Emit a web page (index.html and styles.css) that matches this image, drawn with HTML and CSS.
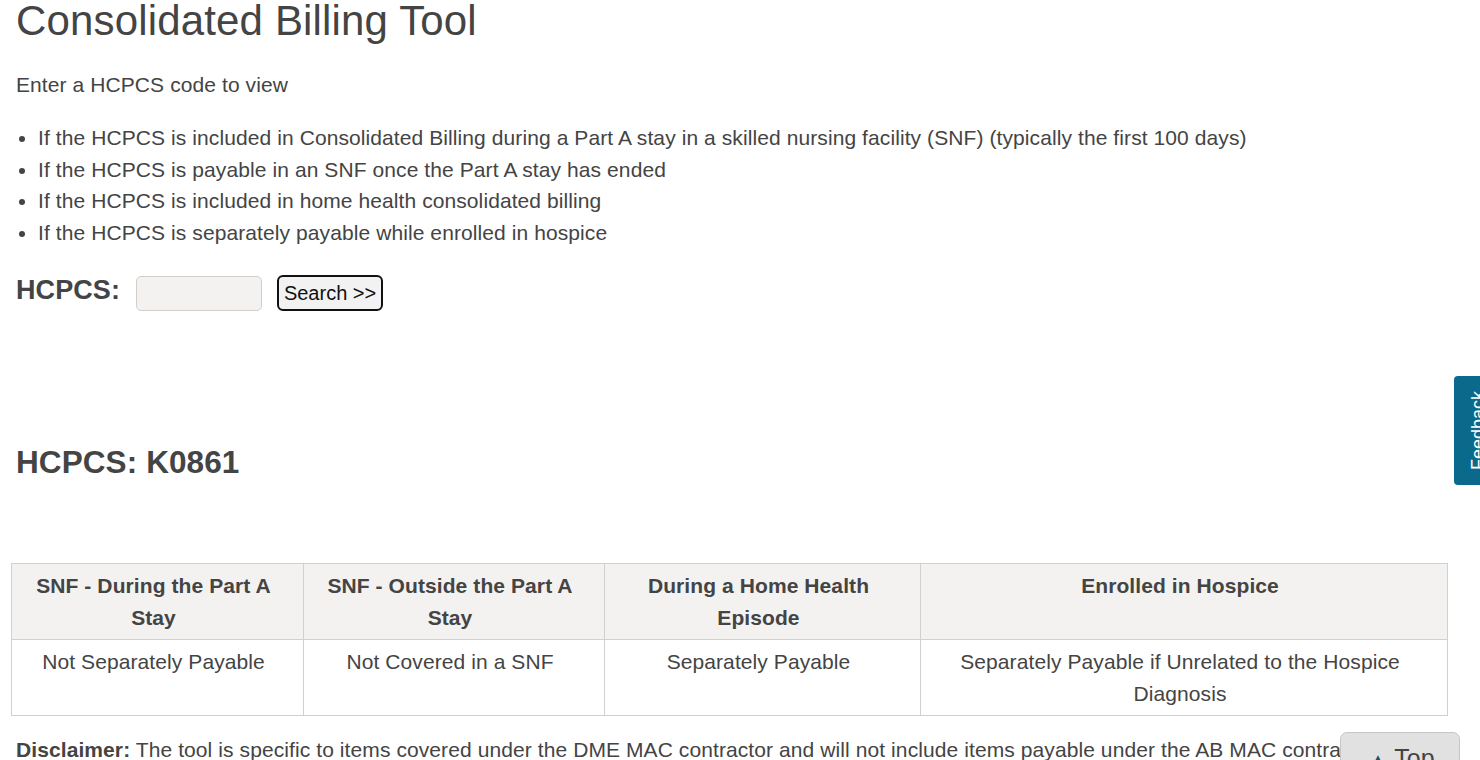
FILE: index.html
```html
<!DOCTYPE html>
<html lang="en">
<head>
<meta charset="utf-8">
<title>Consolidated Billing Tool</title>
<link rel="stylesheet" href="styles.css">
</head>
<body>
<main class="page">
  <h1 class="title">Consolidated Billing Tool</h1>
  <p class="intro">Enter a HCPCS code to view</p>
  <ul class="list">
    <li>If the HCPCS is included in Consolidated Billing during a Part A stay in a skilled nursing facility (SNF) (typically the first 100 days)</li>
    <li>If the HCPCS is payable in an SNF once the Part A stay has ended</li>
    <li>If the HCPCS is included in home health consolidated billing</li>
    <li>If the HCPCS is separately payable while enrolled in hospice</li>
  </ul>
  <form class="search">
    <label class="search-label" for="hcpcs">HCPCS:</label>
    <input class="search-input" id="hcpcs" type="text">
    <button class="search-btn" type="button">Search &gt;&gt;</button>
  </form>
  <h2 class="result-title">HCPCS: K0861</h2>
  <table class="result">
    <colgroup>
      <col class="c1"><col class="c2"><col class="c3"><col class="c4">
    </colgroup>
    <thead>
      <tr>
        <th>SNF - During the Part A Stay</th>
        <th>SNF - Outside the Part A Stay</th>
        <th>During a Home Health Episode</th>
        <th>Enrolled in Hospice</th>
      </tr>
    </thead>
    <tbody>
      <tr>
        <td>Not Separately Payable</td>
        <td>Not Covered in a SNF</td>
        <td>Separately Payable</td>
        <td>Separately Payable if Unrelated to the Hospice Diagnosis</td>
      </tr>
    </tbody>
  </table>
  <p class="disclaimer"><strong>Disclaimer:</strong> The tool is specific to items covered under the DME MAC contractor and will not include items payable under the AB MAC contractor.</p>
</main>
<a class="feedback" href="#"><span>Feedback</span></a>
<a class="top-btn" href="#"><span class="arrow">&#9650;</span> Top</a>
</body>
</html>
```
FILE: styles.css
```css
html, body {
  margin: 0;
  padding: 0;
  background: #ffffff;
  overflow: hidden;
}
body {
  font-family: "Liberation Sans", Arial, sans-serif;
  color: #444444;
  font-size: 21px;
  line-height: 31.5px;
  letter-spacing: 0.09px;
}
.page {
  padding: 0 16px;
}
.title {
  margin: 0 0 27px;
  font-size: 42px;
  line-height: 42px;
  font-weight: normal;
  letter-spacing: 0.16px;
  color: #444444;
}
.intro {
  margin: 0 0 21.5px;
}
.list {
  margin: 0 0 27px;
  padding-left: 22px;
}
.search {
  display: flex;
  align-items: flex-start;
  height: 36px;
  margin: 0 0 132.5px;
}
.search-label {
  font-size: 27px;
  line-height: 30px;
  font-weight: bold;
  margin-right: 16px;
}
.search-input {
  box-sizing: border-box;
  width: 126px;
  height: 35px;
  margin: 1px 15px 0 0;
  background: #f3f2f1;
  border: 1px solid #d3cec9;
  border-radius: 5px;
  padding: 0 8px;
  font: 20px "Liberation Sans", Arial, sans-serif;
}
.search-btn {
  box-sizing: border-box;
  width: 106px;
  height: 36px;
  padding: 0;
  background: #f2f2f2;
  border: 2px solid #111111;
  border-radius: 6px;
  color: #111111;
  font: 20px/1 "Liberation Sans", Arial, sans-serif;
}
.result-title {
  margin: 0 0 81.7px;
  font-size: 31.5px;
  line-height: 37.8px;
  font-weight: bold;
}
.result {
  border-collapse: collapse;
  table-layout: fixed;
  width: 1436px;
  margin-left: -5px;
  border: 1px solid #d3cfcb;
}
.c1 { width: 292px; }
.c2 { width: 301px; }
.c3 { width: 316px; }
.c4 { width: 527px; }
.result th,
.result td {
  border: 1px solid #d3cfcb;
  padding: 6px 14px 5px 6px;
  text-align: center;
  vertical-align: top;
  line-height: 32px;
  font-size: 21px;
}
.result th {
  background: #f3f2f1;
  font-weight: bold;
}
.disclaimer {
  margin: 18px 0 0;
}
.feedback {
  position: fixed;
  top: 376px;
  left: 1454px;
  width: 40px;
  height: 109px;
  box-sizing: border-box;
  display: flex;
  align-items: center;
  padding-left: 15px;
  background: #0b6a8c;
  border-radius: 4px 0 0 4px;
  color: #ffffff;
  text-decoration: none;
  font-size: 18px;
  letter-spacing: 0;
}
.feedback span {
  writing-mode: vertical-rl;
  transform: rotate(180deg);
  line-height: 18px;
}
.top-btn {
  position: fixed;
  top: 732px;
  right: 20px;
  width: 120px;
  height: 44px;
  box-sizing: border-box;
  padding: 12.75px 0 0 27px;
  background: #e1e1e1;
  border: 1px solid #c6c6c6;
  border-radius: 7px 7px 0 0;
  color: #444444;
  text-decoration: none;
  font-size: 25px;
  line-height: 25px;
  letter-spacing: 0;
}
.top-btn .arrow {
  color: #1f4f61;
  font-size: 20px;
}
```
